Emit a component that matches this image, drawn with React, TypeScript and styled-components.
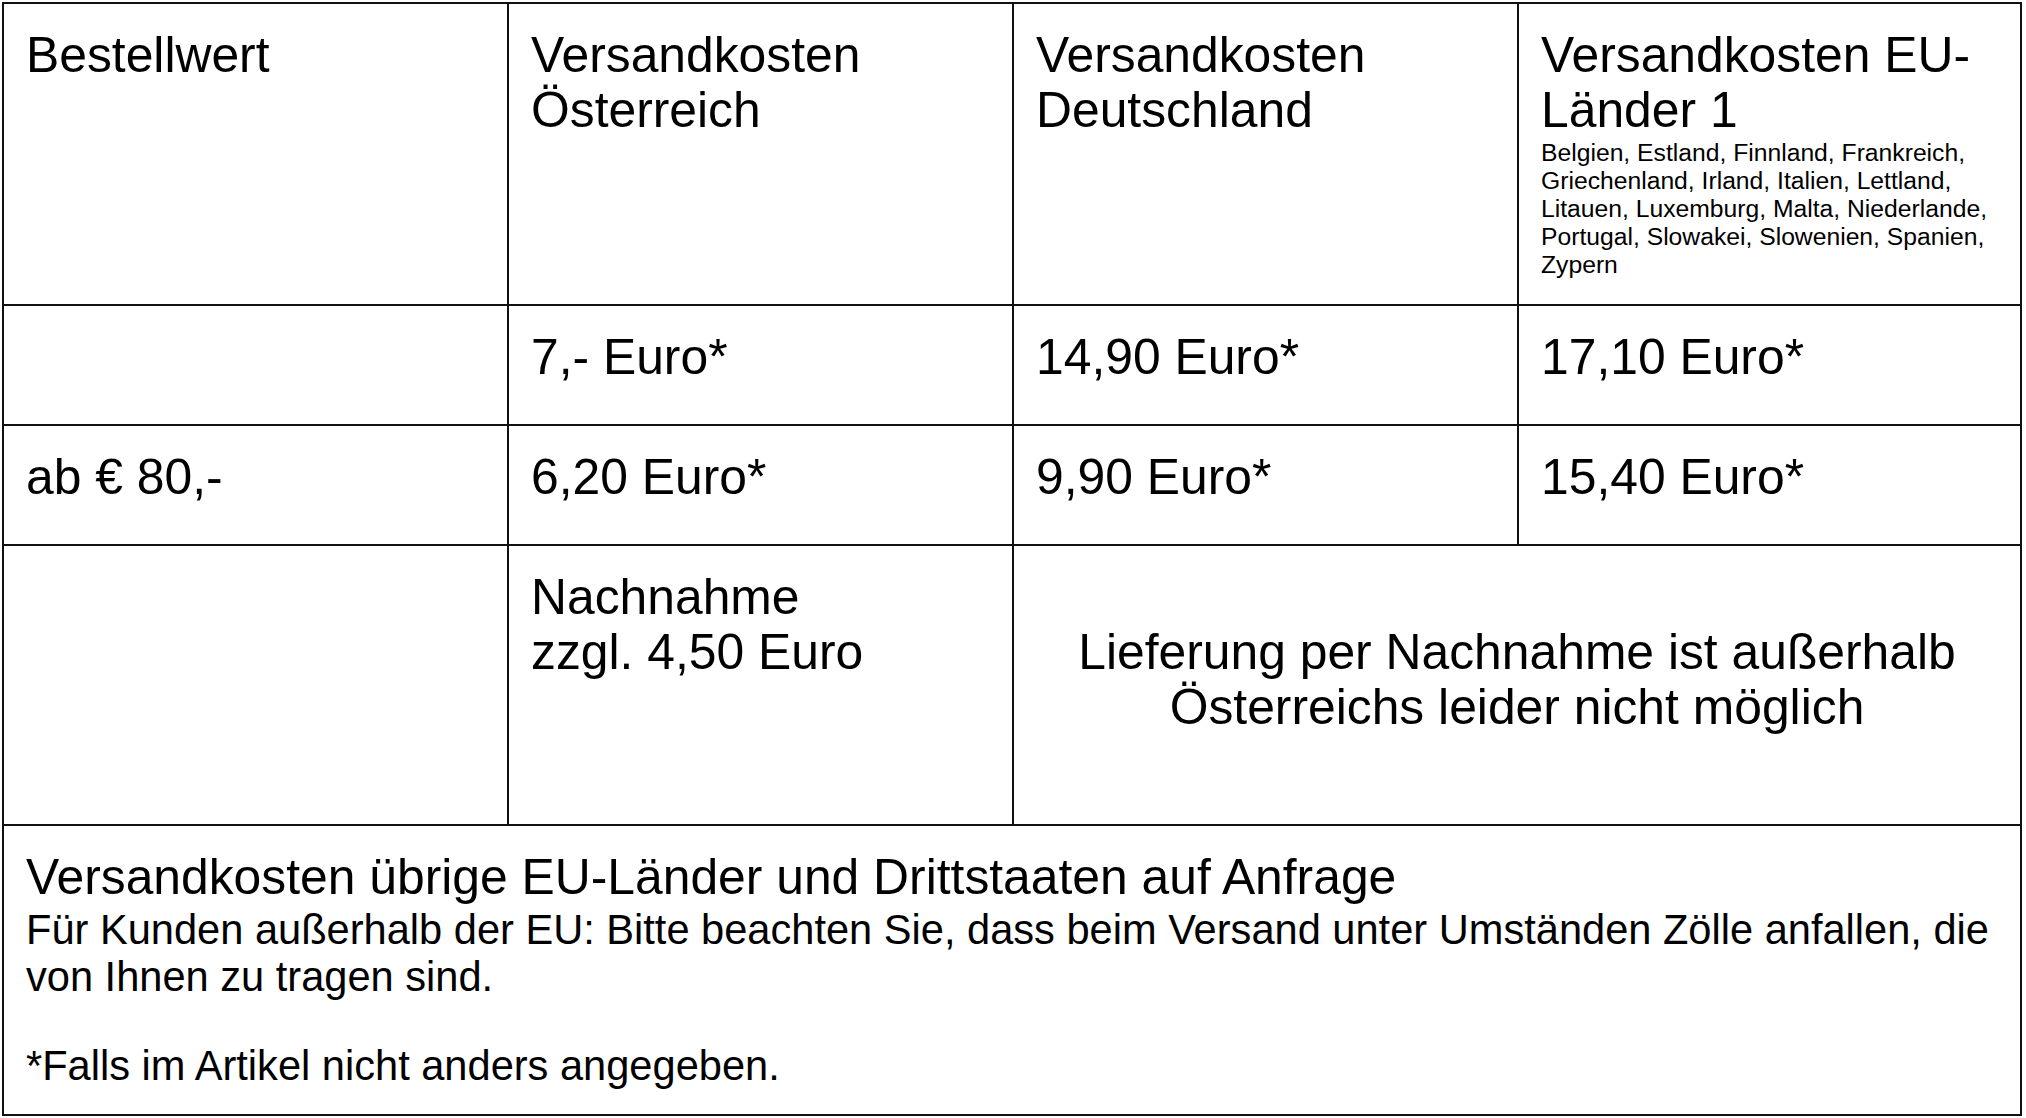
import React from "react";
import styled, { createGlobalStyle } from "styled-components";

const GlobalStyle = createGlobalStyle`
  html, body {
    margin: 0;
    padding: 0;
    background: #ffffff;
  }
  body {
    font-family: "Liberation Sans", Arial, sans-serif;
    color: #000000;
  }
`;

const Table = styled.div`
  display: grid;
  grid-template-columns: 503px 503px 503px 501px;
  grid-template-rows: 300px 118px 118px 278px 288px;
  gap: 2px;
  padding: 2px;
  width: 2020px;
  box-sizing: border-box;
  margin: 2px 0 0 2px;
  background: #111111;
`;

const Cell = styled.div<{ $span?: number; $center?: boolean }>`
  background: #ffffff;
  box-sizing: border-box;
  padding: 24px 21px 0 22px;
  font-size: 49.8px;
  line-height: 1.11;
  grid-column: ${(p) => (p.$span ? `span ${p.$span}` : "auto")};
  ${(p) =>
    p.$center &&
    `
    display: flex;
    align-items: center;
    justify-content: center;
    text-align: center;
    padding: 0 21px 10px 21px;
  `}
`;

const Countries = styled.div`
  font-size: 24.7px;
  line-height: 28px;
`;

const Note = styled.div<{ $first?: boolean }>`
  font-size: 41.6px;
  line-height: 47px;
  margin-top: ${(p) => (p.$first ? "1px" : "0")};
`;

const Spacer = styled.div`
  height: 42px;
`;

export default function App() {
  return (
    <>
      <GlobalStyle />
      <Table>
        <Cell>Bestellwert</Cell>
        <Cell>Versandkosten Österreich</Cell>
        <Cell>Versandkosten Deutschland</Cell>
        <Cell>
          Versandkosten EU-Länder 1
          <Countries>
            Belgien, Estland, Finnland, Frankreich, Griechenland, Irland,
            Italien, Lettland, Litauen, Luxemburg, Malta, Niederlande,
            Portugal, Slowakei, Slowenien, Spanien, Zypern
          </Countries>
        </Cell>

        <Cell />
        <Cell>7,- Euro*</Cell>
        <Cell>14,90 Euro*</Cell>
        <Cell>17,10 Euro*</Cell>

        <Cell>ab € 80,-</Cell>
        <Cell>6,20 Euro*</Cell>
        <Cell>9,90 Euro*</Cell>
        <Cell>15,40 Euro*</Cell>

        <Cell />
        <Cell>
          Nachnahme
          <br />
          zzgl. 4,50 Euro
        </Cell>
        <Cell $span={2} $center>
          Lieferung per Nachnahme ist außerhalb
          <br />
          Österreichs leider nicht möglich
        </Cell>

        <Cell $span={4}>
          Versandkosten übrige EU-Länder und Drittstaaten auf Anfrage
          <Note $first>
            Für Kunden außerhalb der EU: Bitte beachten Sie, dass beim Versand
            unter Umständen Zölle anfallen, die von Ihnen zu tragen sind.
          </Note>
          <Spacer />
          <Note>*Falls im Artikel nicht anders angegeben.</Note>
        </Cell>
      </Table>
    </>
  );
}
